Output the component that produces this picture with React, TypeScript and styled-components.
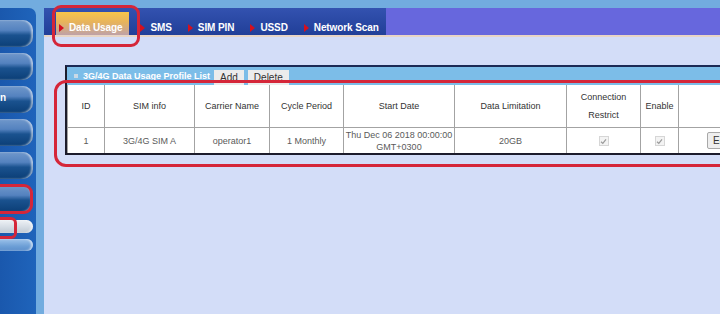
import React from "react";
import styled, { createGlobalStyle } from "styled-components";

const GlobalStyle = createGlobalStyle`
  html, body {
    margin: 0;
    padding: 0;
    background: #6eaadf;
    font-family: "Liberation Sans", Arial, sans-serif;
  }
`;

interface SideButtonProps {
  tone?: "dark" | "silver" | "pale";
  h?: number;
}

interface MarkProps {
  x: number;
  y: number;
  w: number;
  h: number;
  r: number;
}

const tabs = ["Data Usage", "SMS", "SIM PIN", "USSD", "Network Scan"];

const colWidths = [37, 90, 75, 74, 111, 112, 74, 38, 90];

function Check() {
  return (
    <CheckBox>
      <svg width="7" height="7" viewBox="0 0 7 7">
        <path d="M1 3.8 L2.8 5.4 L6 1.4" fill="none" stroke="#9a9a9a" strokeWidth="1.2" />
      </svg>
    </CheckBox>
  );
}

export default function App() {
  return (
    <>
      <GlobalStyle />
      <Frame>
        <Sidebar>
          <SideButton />
          <SideButton />
          <SideButton>n</SideButton>
          <SideButton />
          <SideButton />
          <SideButton />
          <SideButton tone="silver" h={13} style={{ marginTop: 2 }} />
          <SideButton tone="pale" h={12} />
        </Sidebar>
        <Main>
          <TabBar>
            <TabGroup>
              {tabs.map((t, i) => (
                <Tab key={t} active={i === 0}>
                  <Arrow />
                  {t}
                </Tab>
              ))}
            </TabGroup>
          </TabBar>
          <TabLine />
          <Content>
            <Panel>
              <PanelHeader>
                <Square />
                <PanelTitle>3G/4G Data Usage Profile List</PanelTitle>
                <SmallButton>Add</SmallButton>
                <SmallButton>Delete</SmallButton>
              </PanelHeader>
              <Table>
                <colgroup>
                  {colWidths.map((w, i) => (
                    <col key={i} style={{ width: w }} />
                  ))}
                </colgroup>
                <thead>
                  <tr>
                    <Th>ID</Th>
                    <Th>SIM info</Th>
                    <Th>Carrier Name</Th>
                    <Th>Cycle Period</Th>
                    <Th>Start Date</Th>
                    <Th>Data Limitation</Th>
                    <Th>
                      Connection
                      <br />
                      Restrict
                    </Th>
                    <Th>Enable</Th>
                    <Th></Th>
                  </tr>
                </thead>
                <tbody>
                  <tr>
                    <Td>1</Td>
                    <Td>3G/4G SIM A</Td>
                    <Td>operator1</Td>
                    <Td>1 Monthly</Td>
                    <Td>
                      Thu Dec 06 2018 00:00:00
                      <br />
                      GMT+0300
                    </Td>
                    <Td>20GB</Td>
                    <Td>
                      <Check />
                    </Td>
                    <Td>
                      <Check />
                    </Td>
                    <Td align="left">
                      <EditButton>Edit</EditButton>
                    </Td>
                  </tr>
                </tbody>
              </Table>
            </Panel>
          </Content>
        </Main>
        <Mark x={52} y={5} w={88} h={42} r={9} />
        <Mark x={54} y={80} w={690} h={87} r={12} />
        <Mark x={-12} y={184} w={45} h={30} r={9} />
        <Mark x={-12} y={217} w={29} h={22} r={6} />
      </Frame>
    </>
  );
}

const Frame = styled.div`
  position: relative;
  width: 720px;
  height: 314px;
  overflow: hidden;
  display: flex;
  gap: 8px;
  padding-top: 8px;
  box-sizing: border-box;
  background: #72acdf;
`;

const Sidebar = styled.div`
  width: 36px;
  flex-shrink: 0;
  background: linear-gradient(to right, #1a58ad, #1f64bb);
  border-top-right-radius: 7px;
  padding-top: 12px;
  display: flex;
  flex-direction: column;
  gap: 6px;
`;

const SideButton = styled.div<SideButtonProps>`
  width: 33px;
  height: ${(p) => p.h || 27}px;
  border-radius: 0 10px 10px 0;
  box-sizing: border-box;
  color: #fff;
  font-size: 10px;
  font-weight: bold;
  line-height: 24px;
  background: ${(p) =>
    p.tone === "silver"
      ? "linear-gradient(#eef2f6, #d7dee6 50%, #bfc9d3)"
      : p.tone === "pale"
      ? "linear-gradient(#9cc2ea, #6d9fd6 60%, #5b8ecb)"
      : "linear-gradient(#7098cb, #5482bf 38%, #1a528f 56%, #0b3e76)"};
  box-shadow: inset -2px 0 2px rgba(255, 255, 255, 0.55);
`;

const Main = styled.div`
  flex: 1;
  background: #d3ddf8;
  display: flex;
  flex-direction: column;
  overflow: hidden;
`;

const TabBar = styled.div`
  height: 27px;
  display: flex;
  background: #6767dd;
  flex-shrink: 0;
`;

const TabGroup = styled.div`
  width: 342px;
  padding-left: 12px;
  box-sizing: border-box;
  display: flex;
  align-items: flex-end;
  background: linear-gradient(#3352b0, #213f98);
`;

const Tab = styled.div<{ active?: boolean }>`
  box-sizing: border-box;
  display: flex;
  align-items: center;
  align-self: flex-end;
  gap: 3px;
  line-height: 12px;
  height: ${(p) => (p.active ? "23px" : "27px")};
  padding: ${(p) => (p.active ? "9px 7px 0 3px" : "13px 8px 0 8px")};
  margin-right: ${(p) => (p.active ? "3px" : "0")};
  color: #fff;
  font-size: 10px;
  font-weight: bold;
  white-space: nowrap;
  letter-spacing: -0.1px;
  background: ${(p) =>
    p.active ? "linear-gradient(#f8c54a, #e7b35c 45%, #bfa2a8)" : "transparent"};
`;

const Arrow = styled.span`
  width: 0;
  height: 0;
  border-top: 4px solid transparent;
  border-bottom: 4px solid transparent;
  border-left: 5px solid #d5101e;
  margin-right: 2px;
`;

const TabLine = styled.div`
  height: 2px;
  flex-shrink: 0;
  background: #e8d5c5;
`;

const Content = styled.div`
  padding: 28px 0 0 21px;
`;

const Panel = styled.div`
  width: 720px;
  border-top: 2px solid #1b2a55;
  border-left: 2px solid #1c1c2c;
  border-bottom: 2px solid #1c1c2c;
`;

const PanelHeader = styled.div`
  height: 18px;
  background: #7cbde8;
  display: flex;
  align-items: center;
  padding-left: 7px;
  gap: 3px;
`;

const Square = styled.span`
  width: 4px;
  height: 4px;
  background: #c9d9e6;
  margin-right: 2px;
`;

const PanelTitle = styled.span`
  color: #fff;
  font-size: 9px;
  font-weight: bold;
`;

const SmallButton = styled.span`
  height: 15px;
  margin-top: 3px;
  padding: 0 6px;
  margin-left: 1px;
  background: #ececec;
  color: #333;
  font-size: 10px;
  line-height: 15px;
`;

const Table = styled.table`
  border-collapse: collapse;
  table-layout: fixed;
  width: 701px;
  background: #fff;
  font-size: 9px;
`;

const Th = styled.th`
  height: 42px;
  padding: 0;
  border: 1px solid #a3a3a3;
  border-top: none;
  font-weight: normal;
  color: #333;
  line-height: 18px;
  text-align: center;
`;

const Td = styled.td<{ align?: string }>`
  height: 25px;
  padding: 0;
  border: 1px solid #a3a3a3;
  border-bottom: none;
  color: #5a5a5a;
  line-height: 12px;
  text-align: ${(p) => p.align || "center"};
  vertical-align: middle;
`;

const CheckBox = styled.span`
  display: inline-flex;
  align-items: center;
  justify-content: center;
  width: 8px;
  height: 8px;
  border: 1px solid #d6d6d6;
  background: #f3f3f3;
  vertical-align: middle;
`;

const EditButton = styled.span`
  display: inline-block;
  margin-left: 28px;
  padding: 0 5px;
  height: 15px;
  line-height: 15px;
  font-size: 10px;
  color: #333;
  background: #eeeeee;
  border: 1px solid #a8a8a8;
  border-radius: 2px;
`;

const Mark = styled.div<MarkProps>`
  position: absolute;
  left: ${(p) => p.x}px;
  top: ${(p) => p.y}px;
  width: ${(p) => p.w}px;
  height: ${(p) => p.h}px;
  border: 3px solid #d52639;
  border-radius: ${(p) => p.r}px;
  box-sizing: border-box;
  pointer-events: none;
`;
